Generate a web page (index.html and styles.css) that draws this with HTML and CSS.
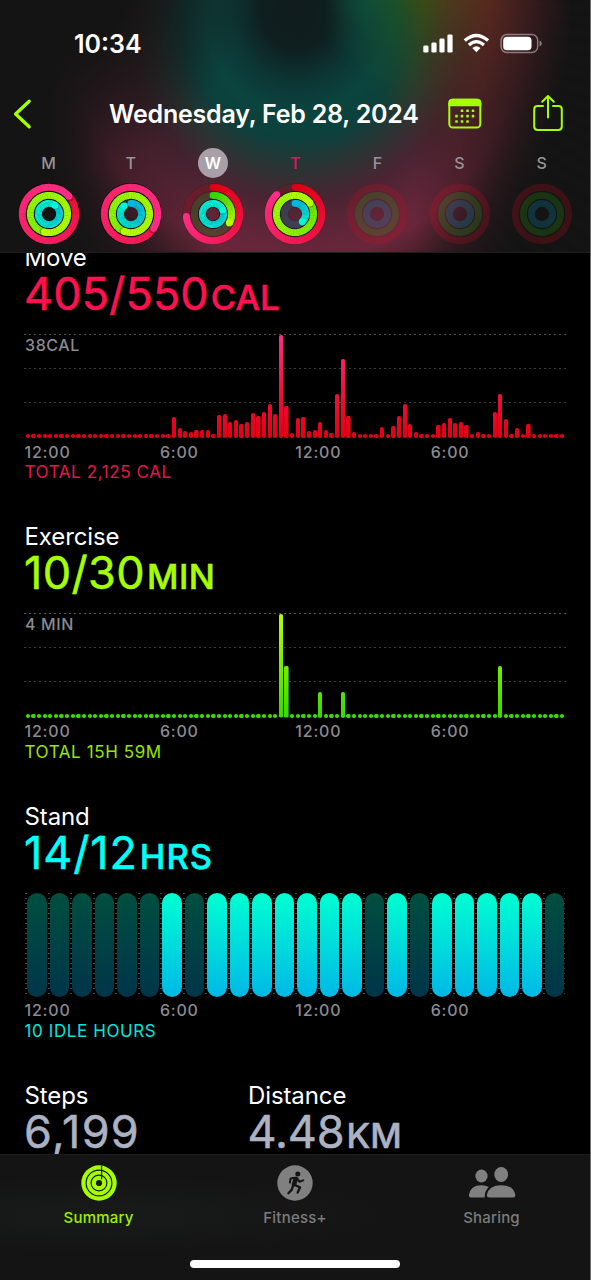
FILE: index.html
```html
<!DOCTYPE html>
<html lang="en">
<head>
  <meta charset="UTF-8">
  <meta name="viewport" content="width=device-width, initial-scale=1.0">
  <title>Fitness Summary</title>
  <link rel="stylesheet" href="styles.css">
</head>
<body>
  <div class="screen">
    <header class="header">
      <div class="status">
        <span class="clock">10:34</span>
        <svg class="status-icons" width="120" height="22" viewBox="0 0 120 22">
          <g fill="#fff">
            <rect x="1.3" y="12.6" width="5.2" height="7" rx="1.4"/>
            <rect x="9.4" y="9.4" width="5.2" height="10.2" rx="1.4"/>
            <rect x="17.4" y="5.6" width="5.2" height="14" rx="1.4"/>
            <rect x="25.4" y="1.4" width="5.2" height="18.2" rx="1.4"/>
            <path d="M54.4 19.2 L50.3 15 Q54.4 11.6 58.5 15 Z"/>
          </g>
          <g fill="none" stroke="#fff" stroke-width="3.3">
            <path d="M42.8 7.6 Q54.4 -2.6 66 7.6"/>
            <path d="M46.9 12 Q54.4 5.2 61.9 12"/>
          </g>
          <rect x="79.1" y="1.5" width="36.6" height="17.9" rx="5.8" fill="none" stroke="#fff" stroke-opacity=".42" stroke-width="1.5"/>
          <rect x="81.2" y="3.7" width="28.3" height="13.6" rx="3.8" fill="#fff"/>
          <path d="M117.6 7.6 Q119.8 8.6 119.8 10.5 Q119.8 12.4 117.6 13.4 Z" fill="#fff" fill-opacity=".45"/>
        </svg>
      </div>

      <div class="nav">
        <svg class="back" width="20" height="32" viewBox="0 0 20 32">
          <path d="M17.2 3.2 L3.6 16 L17.2 28.8" fill="none" stroke="#a6ff00" stroke-width="3.3" stroke-linecap="round" stroke-linejoin="round"/>
        </svg>
        <h1 class="title">Wednesday, Feb 28, 2024</h1>
        <svg class="calendar" width="34" height="32" viewBox="0 0 34 32">
          <rect x="1.3" y="1.8" width="31" height="27.8" rx="3.6" fill="none" stroke="#a6ff00" stroke-width="2"/>
          <path d="M.3 8.3 V5 Q.3 .8 4.6 .8 H29 Q33.3 .8 33.3 5 V8.3 Z" fill="#a6ff00"/>
          <g id="calendar-dots" fill="#a6ff00"></g>
        </svg>
        <svg class="share" width="32" height="40" viewBox="0 0 32 40">
          <g fill="none" stroke="#a6ff00" stroke-width="2" stroke-linecap="round" stroke-linejoin="round">
            <path d="M11 13 H5.6 Q2.2 13 2.2 16.4 V33.6 Q2.2 37 5.6 37 H26.4 Q29.8 37 29.8 33.6 V16.4 Q29.8 13 26.4 13 H21"/>
            <path d="M16 24.6 V3.2 M10.2 8.8 L16 3 L21.8 8.8"/>
          </g>
        </svg>
      </div>

      <div class="week" id="week"></div>
    </header>

    <main class="content">
      <section class="metric move">
        <h2>Move</h2>
        <p class="value">405/550<span class="unit">CAL</span></p>
        <div class="chart"><span class="scale">38CAL</span><div class="bars" id="move-bars"></div></div>
        <div class="axis"><span>12:00</span><span>6:00</span><span>12:00</span><span>6:00</span></div>
        <p class="total">TOTAL 2,125 CAL</p>
      </section>

      <section class="metric exercise">
        <h2>Exercise</h2>
        <p class="value">10/30<span class="unit">MIN</span></p>
        <div class="chart"><span class="scale">4 MIN</span><div class="bars" id="exercise-bars"></div></div>
        <div class="axis"><span>12:00</span><span>6:00</span><span>12:00</span><span>6:00</span></div>
        <p class="total">TOTAL 15H 59M</p>
      </section>

      <section class="metric stand">
        <h2>Stand</h2>
        <p class="value">14/12<span class="unit">HRS</span></p>
        <div class="hours" id="stand-hours"></div>
        <div class="axis"><span>12:00</span><span>6:00</span><span>12:00</span><span>6:00</span></div>
        <p class="total">10 IDLE HOURS</p>
      </section>

      <div class="stats">
        <section class="metric steps">
          <h2>Steps</h2>
          <p class="value">6,199</p>
        </section>
        <section class="metric distance">
          <h2>Distance</h2>
          <p class="value">4.48<span class="unit">KM</span></p>
        </section>
      </div>
    </main>

    <footer class="footer">
      <nav class="tabs">
        <a class="tab active">
          <svg width="36" height="36" viewBox="0 0 36 36">
            <circle cx="18" cy="18" r="17.7" fill="#a6ff00"/>
            <g fill="none" stroke="#171917" stroke-width="1.2">
              <circle cx="18" cy="18" r="12.9"/>
              <circle cx="18" cy="18" r="7.9"/>
              <path d="M20.6 .6 V14.5"/>
            </g>
            <circle cx="18" cy="18" r="3.1" fill="#171917"/>
          </svg>
          <span class="tab-label">Summary</span>
        </a>
        <a class="tab">
          <svg width="36" height="36" viewBox="0 0 36 36">
            <circle cx="18" cy="18" r="17.7" fill="#808080"/>
            <circle cx="20.8" cy="8.9" r="2.5" fill="#141414"/>
            <g fill="none" stroke="#141414" stroke-linecap="round" stroke-linejoin="round">
              <path d="M18.8 14 L17 19.2" stroke-width="4.6"/>
              <path d="M18 12.8 L13.6 13.6 L12.9 17.6" stroke-width="2"/>
              <path d="M20.2 13.4 L22.4 16.8 L26.3 15.4" stroke-width="2"/>
              <path d="M18 20 L23 22.4 L20.6 27.6" stroke-width="2.3"/>
              <path d="M16 20.8 L14.8 24.6 L11.4 28.2" stroke-width="2.3"/>
            </g>
          </svg>
          <span class="tab-label">Fitness+</span>
        </a>
        <a class="tab">
          <svg width="48" height="36" viewBox="0 0 48 36">
            <g fill="#808080">
              <ellipse cx="13.5" cy="11" rx="6.1" ry="6.5"/>
              <path d="M3 32.5 Q.8 32.5 .9 30.2 Q2.2 20.3 13.5 20.3 Q17.7 20.3 20.8 22 Q16.6 25.8 16.7 32.5 Z"/>
              <ellipse cx="33.2" cy="9.5" rx="6.9" ry="7.5"/>
              <path d="M21.4 32.5 Q18.6 32.5 18.8 30 Q20.6 20.2 33.2 20.2 Q45.6 20.2 47.4 30 Q47.6 32.5 44.8 32.5 Z"/>
            </g>
          </svg>
          <span class="tab-label">Sharing</span>
        </a>
      </nav>
      <div class="home-indicator"></div>
    </footer>
  </div>

  <script>
    // progress in laps for move, exercise and stand
    const days = [
      { letter: 'M', rings: [1.135, 1.54, 1.1] },
      { letter: 'T', rings: [1.34, 1.56, 0.89] },
      { letter: 'W', rings: [0.735, 0.33, 1.19], selected: true },
      { letter: 'T', rings: [0.88, 1.15, 0.38], today: true },
      { letter: 'F', rings: [0, 0, 0] },
      { letter: 'S', rings: [0, 0, 0] },
      { letter: 'S', rings: [0, 0, 0] },
    ];

    const ringStyles = [
      { r: 26.7, from: [224, 0, 18], to: [255, 45, 135], track: 'rgba(225, 10, 30, 0.2)' },
      { r: 18.6, from: [50, 215, 0], to: [180, 255, 0], track: 'rgba(50, 185, 15, 0.2)' },
      { r: 10.6, from: [0, 185, 225], to: [0, 250, 215], track: 'rgba(10, 165, 200, 0.22)' },
    ];

    function point(r, lap) {
      const a = lap * Math.PI * 2;
      return `${(31 + r * Math.sin(a)).toFixed(2)} ${(31 - r * Math.cos(a)).toFixed(2)}`;
    }

    function mix(from, to, t) {
      return `rgb(${from.map((c, i) => Math.round(c + (to[i] - c) * t)).join(',')})`;
    }

    function cap(r, lap, radius, color) {
      const [x, y] = point(r, lap).split(' ');
      return `<circle cx="${x}" cy="${y}" r="${radius}" fill="${color}"/>`;
    }

    function drawRing(style, laps) {
      const { r, from, to, track } = style;
      const empty = `<circle cx="31" cy="31" r="${r}" fill="none" stroke="${track}" stroke-width="6.9"/>`;
      if (laps === 0) return empty;

      let out = `<circle cx="31" cy="31" r="${r}" fill="none" stroke="#0c0c0c" stroke-opacity="${laps > 1 ? 0.9 : 0.1}" stroke-width="8.4"/>` + empty;
      const start = Math.max(0, laps - 1);
      const steps = 72;
      if (start === 0) out += cap(r, 0, 3.3, mix(from, to, 0));
      for (let i = 0; i < steps; i++) {
        const a = start + (laps - start) * i / steps;
        const b = start + (laps - start) * (i + 1) / steps;
        const t = laps > 1 ? Math.sqrt(a / laps) : a / laps;
        out += `<path d="M${point(r, a)} A${r} ${r} 0 0 1 ${point(r, b + 0.003)}" fill="none" stroke="${mix(from, to, t)}" stroke-width="6.9"/>`;
      }
      if (laps > 1) out += cap(r, laps + 0.012, 3.3, 'rgba(0, 0, 0, 0.25)');
      return out + cap(r, laps, 3.4, mix(from, to, 1));
    }

    document.getElementById('week').innerHTML = days.map(day => `
      <div class="day ${day.selected ? 'selected' : ''} ${day.today ? 'today' : ''}">
        <span class="letter">${day.letter}</span>
        <svg width="62" height="62" viewBox="0 0 62 62">${ringStyles.map((s, i) => drawRing(s, day.rings[i])).join('')}</svg>
      </div>`).join('');

    // calendar icon dots, first row starts one column later and the last ends one earlier
    const dots = [[1, 3], [0, 3], [0, 2]];
    document.getElementById('calendar-dots').innerHTML = dots.map(([first, last], row) => {
      let out = '';
      for (let col = first; col <= last; col++) {
        out += `<rect x="${7.2 + col * 5.5}" y="${11.4 + row * 5.4}" width="2.6" height="2.6" rx=".6"/>`;
      }
      return out;
    }).join('');

    // one bar per 15 minutes, heights in px
    const idle = 4;
    const move = new Array(96).fill(idle);
    const moveParts = {
      26: [21, 10.5, 7.5, 6.5, 8.5, 8, 8.5, 4.5, 23, 24.5, 16, 18.5, 14.5, 16.5, 25.5, 22, 26, 34.5, 24, 103.5, 32, 5,
        20.7, 21.7, 7.7, 8.5, 16, 8, 5.7, 44.7, 79.7, 22.7, 6.7],
      63: [11, 4.5, 12.5, 22.3, 34.7, 14.7, 6],
      73: [13.7, 15.7, 20, 15.7, 16.7, 13.7, 4.7, 6.7, 4, 4.7, 26.7, 44.7, 19, 4.7, 10.7, 4, 14],
    };
    for (const start in moveParts) {
      moveParts[start].forEach((h, i) => { move[Number(start) + i] = h; });
    }

    const exercise = new Array(96).fill(idle);
    Object.assign(exercise, { 45: 103.5, 46: 51.5, 52: 26, 56: 26, 84: 52 });

    function drawBars(id, data) {
      document.getElementById(id).innerHTML = data
        .map(h => `<span class="slot"><i class="bar" style="height: ${h}px"></i></span>`).join('');
    }
    drawBars('move-bars', move);
    drawBars('exercise-bars', exercise);

    const stood = [6, 8, 9, 10, 11, 12, 13, 14, 16, 18, 19, 20, 21, 22];
    let hours = '';
    for (let i = 0; i < 24; i++) {
      hours += `<div class="hour"><i class="pill ${stood.includes(i) ? 'on' : ''}"></i></div>`;
    }
    document.getElementById('stand-hours').innerHTML = hours;
  </script>
</body>
</html>
```
FILE: styles.css
```css
* {
  box-sizing: border-box;
}

body {
  margin: 0;
  background: #000;
  color: #fff;
  font-family: Inter, "Liberation Sans", sans-serif;
}

h1, h2, p {
  margin: 0;
  font-weight: 400;
}

svg {
  display: block;
  flex: none;
}

.screen {
  display: flex;
  flex-direction: column;
  width: 591px;
  height: 1280px;
  overflow: hidden;
  border-right: 1px solid #6e6e6e;
}

/* header */

.header {
  position: relative;
  z-index: 1;
  flex: none;
  height: 253px;
  overflow: hidden;
  border-bottom: 1px solid #1f1c1d;
  background:
    radial-gradient(circle at 60px -20px, #151414 70px, rgba(21, 20, 20, 0) 190px),
    radial-gradient(ellipse 300px 330px at 297px 10px,
      #101b1c 0, #0f1f20 12%, #0c3634 22%, #0b443f 31%, #0c403d 39%,
      #2b3433 48%, #4a2432 58%, #602539 68%, #6a263b 76%, rgba(70, 30, 43, 0.6) 90%, rgba(20, 20, 20, 0) 104%),
    #141414;
}

/* dark sides and the green to red part of the glow */
.header::before,
.header::after {
  content: "";
  position: absolute;
  inset: 0;
  z-index: -1;
}

.header::before {
  background: linear-gradient(to right, #141414 7%, rgba(20, 20, 20, 0.5) 19%, rgba(20, 20, 20, 0) 36%, rgba(20, 20, 20, 0) 70%, rgba(20, 20, 20, 0.5) 82%, #141414 94%);
}

.header::after {
  background: radial-gradient(ellipse 275px 310px at 297px 10px,
    rgba(15, 75, 56, 0) 10%, #0f4b38 25%, #1b5028 36%, #3a4a17 46%, #4c391d 56%, #58291f 70%, #3a1c1e 84%, #141414 100%);
  -webkit-mask-image: conic-gradient(from 0deg at 297px 10px, #000 0deg, #000 86deg, transparent 140deg, transparent 352deg, #000 360deg);
  mask-image: conic-gradient(from 0deg at 297px 10px, #000 0deg, #000 86deg, transparent 140deg, transparent 352deg, #000 360deg);
}

.status {
  display: flex;
  align-items: center;
  justify-content: space-between;
  height: 88px;
  padding: 0 48px 0 74px;
}

.clock {
  font-size: 25px;
  font-weight: 600;
  letter-spacing: 0;
}

.nav {
  display: flex;
  align-items: center;
  height: 52px;
  padding-left: 12px;
}

.title {
  width: 310px;
  margin-left: 77px;
  font-size: 25px;
  font-weight: 600;
  letter-spacing: -0.22px;
  white-space: nowrap;
}

.calendar {
  margin-left: 29px;
}

.share {
  margin: -2px 0 0 50px;
}

.week {
  display: grid;
  grid-template-columns: repeat(7, 82.2px);
  margin-left: 7.5px;
  padding-top: 8px;
}

.day {
  display: flex;
  flex-direction: column;
  align-items: center;
  gap: 5px;
}

.letter {
  width: 30px;
  height: 30px;
  border-radius: 50%;
  color: #98939a;
  font-size: 16px;
  font-weight: 500;
  line-height: 31px;
  text-align: center;
}

.selected .letter {
  background: #a89fa8;
  color: #fff;
  font-weight: 600;
}

.today .letter {
  color: #ea1350;
}

/* metrics */

.content {
  flex: 1;
  min-height: 0;
  overflow: hidden;
  padding: 0 25px;
}

.content > :first-child {
  margin-top: -12px;
}

.metric {
  height: 279.4px;
}

.metric h2 {
  margin-left: -0.5px;
  font-size: 24px;
  line-height: 34px;
  letter-spacing: -0.1px;
}

.value {
  height: 40px;
  margin-left: -1px;
  font-size: 45px;
  font-weight: 400;
  line-height: 38px;
  white-space: nowrap;
  -webkit-text-stroke: 0.5px currentColor;
}

.unit {
  margin-left: 2px;
  font-size: 34.5px;
  font-weight: 500;
  line-height: 0;
}

.move { color: #ff1150; }
.exercise { color: #a6ff00; }
.stand { color: #00fff6; }
.steps, .distance { color: #acb2c1; }

.move .value { letter-spacing: 0.1px; }
.exercise .value { letter-spacing: 0.4px; }
.stand .value { letter-spacing: 0.9px; }
.steps .value { letter-spacing: 1.3px; }
.distance .value { letter-spacing: -0.1px; }

.metric h2 {
  color: #fff;
}

.chart {
  display: flex;
  flex-direction: column;
  justify-content: space-between;
  height: 104px;
  margin: 19px -2px 0 -1px;
  background:
    repeating-linear-gradient(to right, #585858 0 2px, transparent 2px 5px) 0 0 / 100% 1px no-repeat,
    repeating-linear-gradient(to right, #3c3c3c 0 2px, transparent 2px 5px) 0 34px / 100% 1px no-repeat,
    repeating-linear-gradient(to right, #3c3c3c 0 2px, transparent 2px 5px) 0 68px / 100% 1px no-repeat;
}

.scale {
  height: 0;
  padding-top: 1px;
  margin-left: 1px;
  color: #8b8a90;
  font-size: 16px;
  font-weight: 500;
  line-height: 21px;
  letter-spacing: 0.6px;
}

.bars {
  display: flex;
  align-items: flex-end;
  width: 540.6px;
  height: 103.4px;
  margin: 0 0 0.6px 1px;
}

.slot {
  display: flex;
  flex: 1;
  align-items: flex-end;
  justify-content: center;
}

.bar {
  width: 4.2px;
  border-radius: 1.8px;
  background: linear-gradient(#ff2d8a, #f5103f 50%, #e00012) bottom / 100% 104px no-repeat;
}

.exercise .bar {
  background-image: linear-gradient(#b4ff00, #37d900);
}

.axis {
  display: grid;
  grid-template-columns: repeat(4, 135.4px);
  margin: 1.5px 0 0 -0.5px;
  color: #8b8a90;
  font-size: 16px;
  font-weight: 500;
  line-height: 24px;
  letter-spacing: 0.8px;
}

.total {
  margin: 0.9px 0 0 -0.5px;
  font-size: 17px;
  line-height: 17px;
  letter-spacing: 0.6px;
}

.move .total { color: #e8144d; }
.exercise .total { color: #97e600; }
.stand .total { color: #00e6dc; }

.hours {
  display: flex;
  width: 540px;
  height: 104px;
  margin-top: 19px;
  background: repeating-linear-gradient(#3c3c3c 0 1px, transparent 1px 5px) 539px 0 / 2px 100% no-repeat;
}

.hour {
  flex: 1;
  padding-left: 2px;
  background: repeating-linear-gradient(#4a4a4a 0 1px, transparent 1px 5px) 0 0 / 2px 100% no-repeat;
}

.pill {
  display: block;
  width: 19.6px;
  height: 104px;
  border-radius: 10px;
  background: linear-gradient(#004f3f, #00354a);
}

.pill.on {
  background: linear-gradient(#00ffd2, #00b8e6);
}

.stats {
  display: grid;
  grid-template-columns: 223.5px 1fr;
}

/* tab bar */

.footer {
  position: relative;
  display: flex;
  flex: none;
  flex-direction: column;
  align-items: center;
  height: 126px;
  border-top: 1px solid #1c1c1c;
  background: radial-gradient(ellipse at 100px 60px, #191a1a, #141414 300px);
}

.tabs {
  display: grid;
  grid-template-columns: repeat(3, 196.5px);
  height: 105px;
  padding-top: 10px;
}

.tab {
  display: flex;
  flex-direction: column;
  align-items: center;
  gap: 8px;
  color: #7c7c7c;
}

.tab-label {
  font-size: 15px;
  font-weight: 500;
  line-height: 18px;
  letter-spacing: 0.2px;
}

.tab.active {
  color: #9cf000;
}

.home-indicator {
  width: 210px;
  height: 8px;
  border-radius: 4px;
  background: #fff;
}
```
